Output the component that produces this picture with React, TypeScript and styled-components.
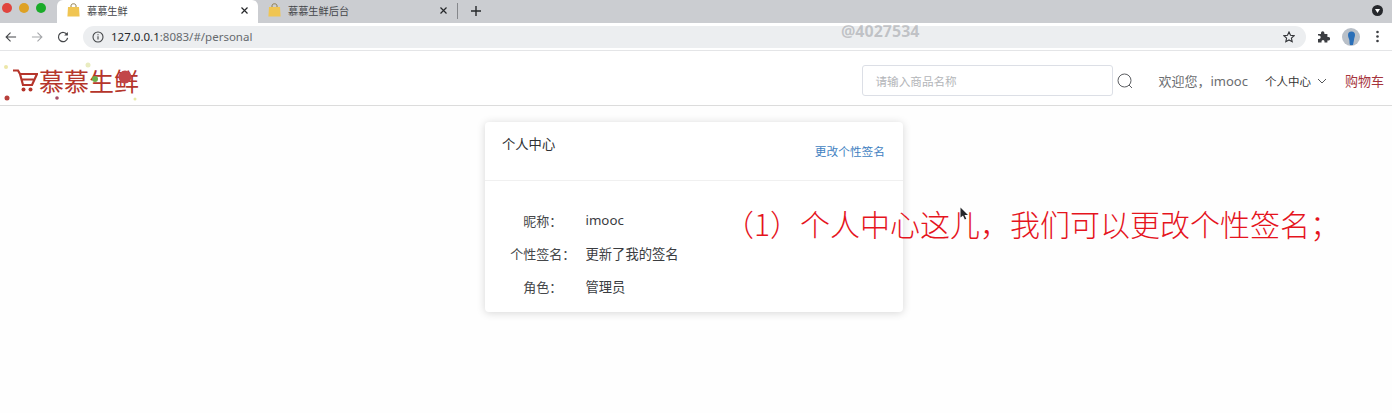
import styled, { createGlobalStyle } from 'styled-components';

const cjk = '"Noto Sans CJK SC", "Noto Sans", sans-serif';

const GlobalStyle = createGlobalStyle`
  html, body {
    margin: 0;
    padding: 0;
    background: #fff;
    font-family: "Noto Sans", ${cjk};
  }
  * { box-sizing: border-box; }
`;

const Page = styled.div`
  position: relative;
  width: 1392px;
  height: 413px;
  overflow: hidden;
  background: #fefefe;
`;

const TabStrip = styled.div`
  display: flex;
  align-items: stretch;
  height: 23px;
  background: #cbcdd1;
`;

const WindowDots = styled.div`
  display: flex;
  align-items: center;
  gap: 7px;
  width: 57px;
  padding: 0 0 8px 2px;
`;

const Dot = styled.span<{ $color: string }>`
  width: 10px;
  height: 10px;
  border-radius: 50%;
  background: ${props => props.$color};
`;

const Tab = styled.div<{ $active?: boolean }>`
  display: flex;
  align-items: center;
  width: ${props => (props.$active ? '201px' : '199px')};
  padding: 0 9px 3px 10px;
  border-radius: 6px 6px 0 0;
  background: ${props => (props.$active ? '#fff' : 'transparent')};
  color: #44464a;
  font-size: 10.2px;
`;

const TabTitle = styled.span`
  flex: 1;
  margin-left: 7px;
`;

const TabDivider = styled.span`
  width: 1px;
  height: 16px;
  align-self: center;
  margin-bottom: 2px;
  background: #85878b;
`;

const NewTab = styled.div`
  display: flex;
  align-items: center;
  padding: 0 0 2px 12px;
  color: #333;
  flex: 1;
`;

const ProfileMenu = styled.span`
  display: flex;
  align-items: center;
  justify-content: center;
  width: 11px;
  height: 11px;
  margin: 5px 9px 0 auto;
  border-radius: 50%;
  background: #26282c;
`;

const Toolbar = styled.div`
  display: flex;
  align-items: center;
  height: 28px;
  padding: 0 8px 0 5px;
  background: #fff;
  border-bottom: 1px solid #e4e5e7;
`;

const NavIcons = styled.div`
  display: flex;
  align-items: center;
  gap: 14px;
  width: 78px;
`;

const AddressBar = styled.div`
  display: flex;
  align-items: center;
  width: 1223px;
  height: 22px;
  padding: 0 11px 0 9px;
  border-radius: 11px;
  background: #eceef0;
  font-size: 11.5px;
  color: #666a6e;
`;

const Host = styled.span`
  margin-left: 7px;
  color: #26282b;
`;

const StarButton = styled.span`
  display: flex;
  margin-left: auto;
`;

const ToolbarRight = styled.div`
  display: flex;
  align-items: center;
  gap: 12px;
  margin-left: 11px;
`;

const MenuDots = styled.svg`
  margin-left: 4px;
`;

const Header = styled.header`
  display: flex;
  align-items: center;
  height: 55px;
  padding: 5px 8px 0 4px;
  background: #fff;
  border-bottom: 1px solid #dcdcdc;
`;

const Logo = styled.div`
  position: relative;
  display: flex;
  align-items: center;
  width: 136px;
  height: 44px;
  padding-left: 8px;
`;

const LogoText = styled.span`
  margin-left: 1px;
  font-family: ${cjk};
  font-size: 25px;
  letter-spacing: 0;
  color: #b5352b;
  line-height: 1;
`;

const LogoSpecks = styled.svg`
  position: absolute;
  inset: 0;
`;

const Search = styled.div`
  display: flex;
  align-items: center;
  margin-left: auto;
`;

const SearchInput = styled.div`
  display: flex;
  align-items: center;
  width: 251px;
  height: 31px;
  padding-left: 13px;
  border: 1px solid #dcdfe6;
  border-radius: 3px;
  font-size: 11.6px;
  color: #b3b5b9;
`;

const SearchIcon = styled.svg`
  margin-left: 4px;
`;

const Welcome = styled.span`
  margin-left: 26px;
  font-size: 13px;
  color: #6b6d70;
`;

const Account = styled.span`
  display: flex;
  align-items: center;
  gap: 6px;
  margin-left: 17px;
  font-size: 11.5px;
  color: #333;
`;

const Cart = styled.span`
  margin-left: 18px;
  font-size: 13px;
  color: #a6343c;
`;

const Main = styled.main`
  display: flex;
  justify-content: center;
  padding: 16px 4px 0 0;
`;

const Card = styled.section`
  width: 418px;
  height: 190px;
  background: #fff;
  border-radius: 4px;
  box-shadow: 0 1px 8px rgba(0, 0, 0, 0.16);
`;

const CardHeader = styled.div`
  display: flex;
  justify-content: space-between;
  height: 59px;
  padding: 13px 18px 0 17px;
  border-bottom: 1px solid #f0f0f0;
`;

const CardTitle = styled.h2`
  margin: 0;
  font-size: 13.3px;
  font-weight: 400;
  line-height: 18px;
  color: #303133;
`;

const EditLink = styled.a`
  margin-top: 7px;
  font-size: 11.7px;
  line-height: 18px;
  color: #3f7fc1;
`;

const InfoList = styled.div`
  display: flex;
  flex-direction: column;
  gap: 13.3px;
  padding: 29px 0 0 15px;
`;

const InfoRow = styled.div`
  display: flex;
  align-items: center;
  height: 20px;
  font-size: 13.3px;
  color: #3a3c3f;
`;

const InfoLabel = styled.span`
  width: 85.5px;
  font-size: 13px;
  text-align: center;
  color: #45474a;
`;

const InfoValue = styled.span`
  margin-left: 0;
`;

const Watermark = styled.span`
  position: absolute;
  left: 841px;
  top: 20px;
  font-size: 16px;
  font-weight: 700;
  color: rgba(120, 122, 128, 0.38);
`;

const Caption = styled.div`
  position: absolute;
  left: 724px;
  top: 202px;
  font-family: ${cjk};
  font-size: 30px;
  font-weight: 300;
  line-height: 42px;
  color: #e5141d;
  white-space: nowrap;
`;

const Pointer = styled.svg`
  position: absolute;
  left: 960px;
  top: 207px;
`;

const BagIcon = () => (
  <svg width="13" height="14" viewBox="0 0 13 14">
    <path d="M4 4V2.8C4 1.5 5 .8 6.5.8S9 1.5 9 2.8V4" fill="none" stroke="#8d7a45" strokeWidth="1" />
    <path d="M1 4h11l.6 9.5H.4z" fill="#f0c552" />
  </svg>
);

const CloseIcon = () => (
  <svg width="9" height="9" viewBox="0 0 9 9">
    <path d="M1.5 1.5l6 6M7.5 1.5l-6 6" stroke="#26282b" strokeWidth="1.2" />
  </svg>
);

const logoSpecks = [
  { x: 2, y: 8, r: 2, c: '#ece7a8' },
  { x: 84, y: 6, r: 2.5, c: '#e9ecc0' },
  { x: 3, y: 39, r: 2.5, c: '#b8403c' },
  { x: 53, y: 39, r: 1.8, c: '#a44b66' },
  { x: 131, y: 40, r: 1.5, c: '#e6e9a8' },
  { x: 91, y: 20, r: 3, c: '#6fae4a' },
  { x: 121, y: 18, r: 6.5, c: '#c2464a' },
];

export default function App() {
  return (
    <Page>
      <GlobalStyle />
      <TabStrip>
        <WindowDots>
          <Dot $color="#e0443e" />
          <Dot $color="#dea123" />
          <Dot $color="#1aab29" />
        </WindowDots>
        <Tab $active>
          <BagIcon />
          <TabTitle>慕慕生鲜</TabTitle>
          <CloseIcon />
        </Tab>
        <Tab>
          <BagIcon />
          <TabTitle>慕慕生鲜后台</TabTitle>
          <CloseIcon />
        </Tab>
        <TabDivider />
        <NewTab>
          <svg width="12" height="12" viewBox="0 0 12 12">
            <path d="M6 1v10M1 6h10" stroke="#26282b" strokeWidth="1.4" />
          </svg>
        </NewTab>
        <ProfileMenu>
          <svg width="5" height="4" viewBox="0 0 5 4">
            <path d="M0 0h5L2.5 4z" fill="#fff" />
          </svg>
        </ProfileMenu>
      </TabStrip>

      <Toolbar>
        <NavIcons>
          <svg width="12" height="12" viewBox="0 0 13 12">
            <path d="M12 6H1.5M6 1.2L1.2 6 6 10.8" fill="none" stroke="#45474a" strokeWidth="1.2" />
          </svg>
          <svg width="12" height="12" viewBox="0 0 13 12">
            <path d="M1 6h10.5M7 1.2L11.8 6 7 10.8" fill="none" stroke="#a5a7aa" strokeWidth="1.2" />
          </svg>
          <svg width="12" height="12" viewBox="0 0 13 13">
            <path d="M11 4.2A5 5 0 1 0 11.5 7.5" fill="none" stroke="#45474a" strokeWidth="1.3" />
            <path d="M11.8 1v4h-4z" fill="#45474a" />
          </svg>
        </NavIcons>
        <AddressBar>
          <svg width="12" height="12" viewBox="0 0 12 12">
            <circle cx="6" cy="6" r="5" fill="none" stroke="#45474a" strokeWidth="1.1" />
            <path d="M6 5.2v3.4M6 3.2v1" stroke="#45474a" strokeWidth="1.1" />
          </svg>
          <Host>127.0.0.1</Host>
          <span>:8083/#/personal</span>
          <StarButton>
            <svg width="12" height="12" viewBox="0 0 12 12">
              <path
                d="M6 1l1.5 3.3 3.6.4-2.7 2.4.8 3.6L6 8.9l-3.2 1.8.8-3.6L.9 4.7l3.6-.4z"
                fill="none"
                stroke="#303236"
                strokeWidth="1.1"
              />
            </svg>
          </StarButton>
        </AddressBar>
        <ToolbarRight>
          <svg width="13" height="13" viewBox="0 0 13 13">
            <path
              d="M1 4h3V3a1.7 1.7 0 0 1 3.4 0v1h3v3h1a1.7 1.7 0 0 1 0 3.4h-1V12.500H7.500v-1a1.500 1.500 0 0 0-3 0v1H1V9h1a1.700 1.700 0 0 0 0-3.400H1z"
              fill="#3c3e42"
            />
          </svg>
          <svg width="18" height="18" viewBox="0 0 18 18">
            <circle cx="9" cy="9" r="9" fill="#b9c0c8" />
            <path d="M6 7a3.500 3.500 0 0 1 7 0c0 2-1 3-1 5l-1 5H8c-1-2 0-4-1-6-.6-1.300-1-2.500-1-4z" fill="#2a6fb8" />
          </svg>
          <MenuDots width="3" height="13" viewBox="0 0 3 13">
            <circle cx="1.500" cy="2" r="1.300" fill="#3c3e42" />
            <circle cx="1.500" cy="6.500" r="1.300" fill="#3c3e42" />
            <circle cx="1.500" cy="11" r="1.300" fill="#3c3e42" />
          </MenuDots>
        </ToolbarRight>
      </Toolbar>

      <Header>
        <Logo>
          <LogoSpecks width="136" height="44" viewBox="0 0 136 44">
            {logoSpecks.map((s, idx) => (
              <circle key={idx} cx={s.x} cy={s.y} r={s.r} fill={s.c} />
            ))}
          </LogoSpecks>
          <svg width="26" height="24" viewBox="0 0 24 24">
            <path
              d="M0 1.500h5L7 5h17l-5 11H10L7 5M8.500 10.500h12"
              fill="none"
              stroke="#b5352b"
              strokeWidth="2.200"
            />
            <circle cx="10.500" cy="20.500" r="2" fill="#b5352b" />
            <circle cx="17.500" cy="20.500" r="2" fill="#b5352b" />
          </svg>
          <LogoText>慕慕生鲜</LogoText>
        </Logo>
        <Search>
          <SearchInput>请输入商品名称</SearchInput>
          <SearchIcon width="16" height="16" viewBox="0 0 16 16">
            <circle cx="7.500" cy="7.500" r="6.500" fill="none" stroke="#5c5e62" strokeWidth="1" />
            <path d="M12 12l3 3" stroke="#5c5e62" strokeWidth="1" />
          </SearchIcon>
        </Search>
        <Welcome>欢迎您，imooc</Welcome>
        <Account>
          个人中心
          <svg width="10" height="6" viewBox="0 0 10 6">
            <path d="M1 1l4 4 4-4" fill="none" stroke="#55575a" strokeWidth="1" />
          </svg>
        </Account>
        <Cart>购物车</Cart>
      </Header>

      <Main>
        <Card>
          <CardHeader>
            <CardTitle>个人中心</CardTitle>
            <EditLink>更改个性签名</EditLink>
          </CardHeader>
          <InfoList>
            <InfoRow>
              <InfoLabel>昵称：</InfoLabel>
              <InfoValue>imooc</InfoValue>
            </InfoRow>
            <InfoRow>
              <InfoLabel>个性签名：</InfoLabel>
              <InfoValue>更新了我的签名</InfoValue>
            </InfoRow>
            <InfoRow>
              <InfoLabel>角色：</InfoLabel>
              <InfoValue>管理员</InfoValue>
            </InfoRow>
          </InfoList>
        </Card>
      </Main>

      <Watermark>@4027534</Watermark>
      <Caption>（1）个人中心这儿，我们可以更改个性签名；</Caption>
      <Pointer width="9" height="14" viewBox="0 0 9 14">
        <path d="M.5.500v10l2.500-2 1.800 4 1.500-.7-1.800-3.800H8z" fill="#26282b" />
      </Pointer>
    </Page>
  );
}
